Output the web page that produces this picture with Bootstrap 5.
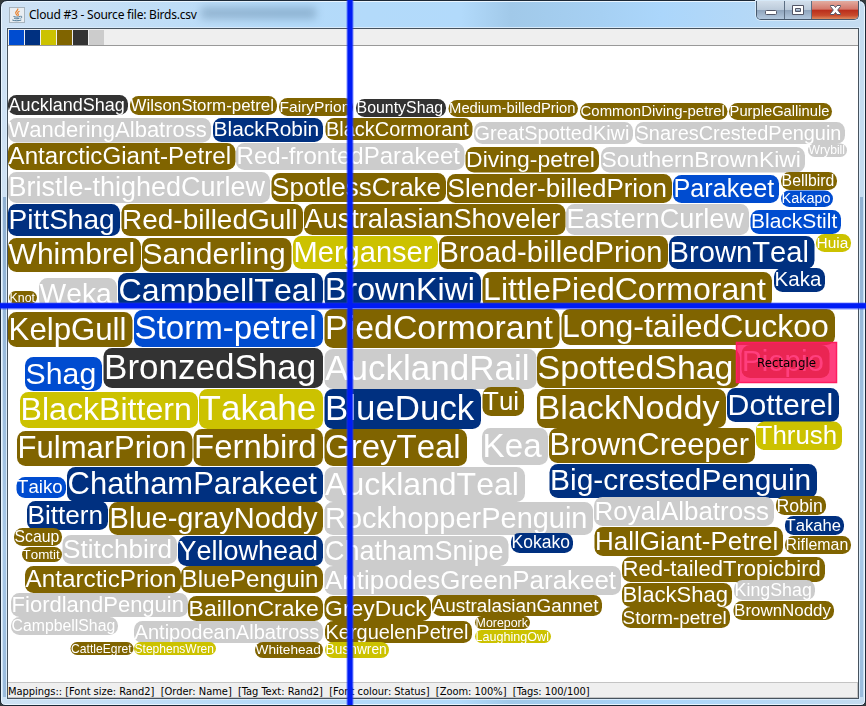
<!DOCTYPE html>
<html lang="en">
<head>
<meta charset="utf-8">
<title>Cloud #3 - Source file: Birds.csv</title>
<link href="https://cdn.jsdelivr.net/npm/bootstrap@5.3.0/dist/css/bootstrap.min.css" rel="stylesheet">
<style>
body{width:866px;height:706px;overflow:hidden;background:#333a3c;font-family:"DejaVu Sans Condensed","DejaVu Sans",sans-serif;color:#000}
.win{width:866px;height:706px;border:1px solid #1c2836;border-radius:7px 7px 5px 5px;padding:1px 6px 6px;
 background:linear-gradient(90deg,#cfe2f4 0,#b4daf9 280px,#b2dafb 460px,#a1c9e9 510px,#a6d0f3 600px,#abd6fb 660px,#b8d9f5 780px,#c5dcf0 100%);box-shadow:inset 0 0 0 1px #e9f5ff}
.win::before,.win::after{content:"";position:absolute;top:196px;bottom:8px;width:3px;left:2px;background:linear-gradient(#8fb0d1,#a9c9e8 70%,#9abbdc)}
.win::after{left:auto;right:2px}
.titlebar{height:26px}
.caption{font:12px/26px "Noto Sans","Open Sans",sans-serif;letter-spacing:-.23px;padding-left:4px;white-space:pre}
.ghost{left:200px;top:6px;width:115px;height:12px;background:#5c7f9d;opacity:.42;filter:blur(4px)}
.java{width:16px;height:16px;margin:5px 0 0 2px}
.ctl{height:19px;width:103px;margin-top:-1px;border:1px solid #46586c;border-top:0;border-radius:0 0 5px 5px;overflow:hidden;box-shadow:0 0 0 1px #d7e9f8}
.cbtn{width:28px;border-right:1px solid #5c6e83;background:linear-gradient(#d3dfeb 0,#bccbdb 48%,#8ea3bb 50%,#b2c7dd 100%)}
.cbtn.mid{width:27px}
.cbtn.xx{flex:1;border:0;background:linear-gradient(#e2aca0 0,#d4776a 46%,#b92d1b 50%,#c84a2c 80%,#dd8b60 100%)}
.client{background:#fff;border:1px solid #47535e;box-shadow:0 0 0 1px #d9ebfb;height:671px;width:852px}
.legend{height:17px;background:#efefef;border-bottom:1px solid #999;padding-left:1px;gap:1px}
.sw{width:15px;height:15px;margin-top:1px}
.c-b{background:#004cd0;fill:#004cd0}.c-n{background:#003080;fill:#003080}.c-y{background:#ccc200;fill:#ccc200}
.c-o{background:#806400;fill:#806400}.c-k{background:#333;fill:#333}.c-g{background:#ccc;fill:#ccc}
.status{height:16px;background:#efefef;border:1px solid #c4c4c4;border-left:0;font-size:11px;line-height:17px;white-space:pre;letter-spacing:-.02px}
.over{left:0;top:0;pointer-events:none}
.guides{z-index:2}
.tagtext{font-family:"Liberation Sans",Arial,sans-serif;fill:#fff;font-kerning:none}
</style>
<script src="https://cdn.jsdelivr.net/npm/bootstrap@5.3.0/dist/js/bootstrap.bundle.min.js"></script>
</head>
<body>
<div class="win position-relative d-flex flex-column">
  <div class="ghost position-absolute"></div>
  <header class="titlebar d-flex align-items-start">
    <svg class="java" viewBox="0 0 16 16"><rect x=".5" y=".5" width="15" height="15" fill="#e9eef2" stroke="#a7b4be"/><path d="M8.7 1.5c1.2 2-3.3 3.2-1.8 5.2.5.8 1.2 1.2 1 2M10.5 4.3c-1.700.7-2.500 1.700-1.300 2.900.5.7.2 1.200-.5 1.700" fill="none" stroke="#e8822e" stroke-width="1.2"/><path d="M4.500 9.500c2 .8 4.500.8 6.500 0M5.200 11.300c1.700.6 3.600.6 5.200 0M3.300 13c2.500 1 6.500 1 9 0M11.300 9.300c2-.5 2 1.500.2 2" fill="none" stroke="#4d7894"/></svg>
    <div class="caption">Cloud #3 - Source file: Birds.csv</div>
    <div class="ctl d-flex ms-auto">
      <div class="cbtn d-flex"><svg width="27" height="18"><rect x="8.500" y="9.500" width="11" height="4" rx="1" fill="#fff" stroke="#535666"/></svg></div>
      <div class="cbtn mid d-flex"><svg width="26" height="18"><path fill-rule="evenodd" d="M7.500 4.500h11v9h-11zM10.500 7.500v3h5v-3z" fill="#fff" stroke="#535666"/></svg></div>
      <div class="cbtn xx d-flex"><svg width="46" height="18"><path d="M18.500 4.500h3.500l1.500 2 1.500-2h3.500v1l-2.800 3.500 2.800 3.500v1h-3.500l-1.500-2-1.500 2h-3.500v-1l2.800-3.500-2.800-3.500z" fill="#fff" stroke="#535666"/></svg></div>
    </div>
  </header>
  <main class="client d-flex flex-column">
    <div class="legend d-flex"><div class="sw c-b"></div><div class="sw c-n"></div><div class="sw c-y"></div><div class="sw c-o"></div><div class="sw c-k"></div><div class="sw c-g"></div></div>
    <div class="flex-grow-1"></div>
    <footer class="status">Mappings:: [Font size: Rand2]  [Order: Name]  [Tag Text: Rand2]  [Font colour: Status]  [Zoom: 100%]  [Tags: 100/100]</footer>
  </main>
  <svg id="cloud" class="over position-fixed" width="866" height="706" viewBox="0 0 866 706"></svg>
  <svg class="over guides position-fixed" width="866" height="706" viewBox="0 0 866 706">
    <rect x="736.500" y="342.500" width="100" height="40" fill="#ff1864" fill-opacity=".83" stroke="#ff1c60" stroke-width="1.500"/>
    <text x="757" y="367" font-size="12" textLength="59" lengthAdjust="spacingAndGlyphs">Rectangle</text>
    <path d="M350 0V705M0 306H866" stroke="#2440ff" stroke-opacity=".55" stroke-width="7"/>
    <path d="M350 0V705M0 305.800H866" stroke="#001cf5" stroke-width="5"/>
  </svg>
</div>
<script>
// colour, left, top, right, bottom, label
const tags = `k 8 95 128 115 AucklandShag
o 130 96 277 115 WilsonStorm-petrel
o 279 98 353 116 FairyPrion
k 356 99 446 117 BountyShag
o 448.5 100 578 117 Medium-billedPrion
o 580 103 727.5 120 CommonDiving-petrel
o 729 103 832 120 PurpleGallinule
g 8 118 211 142.5 WanderingAlbatross
n 213 118 323 142 BlackRobin
o 325.5 118 472.5 140 BlackCormorant
g 474 122 633 144 GreatSpottedKiwi
g 635 122 845 144 SnaresCrestedPenguin
g 808 143.5 847 157 Wrybill
o 8 143 235.5 170 AntarcticGiant-Petrel
g 236 143 464.5 170 Red-frontedParakeet
o 465.5 147 599 172.5 Diving-petrel
g 601 147 805 172.5 SouthernBrownKiwi
g 8 172 270 203 Bristle-thighedCurlew
o 271.5 173 446 202 SpotlessCrake
o 447 174 672 203 Slender-billedPrion
b 673 175 779 203 Parakeet
o 781 172 837 190 Bellbird
b 781 190.5 833 207 Kakapo
n 8 204 120 236 PittShag
o 121.5 204 303 236 Red-billedGull
o 304 204 565.5 235 AustralasianShoveler
g 566 204 749 235 EasternCurlew
b 750.5 210 841 234 BlackStilt
y 816 234 851 252 Huia
o 8 238 141 272 Whimbrel
o 142 238 291.5 272 Sanderling
y 293 236 438 269 Merganser
o 439 236 668 269 Broad-billedPrion
n 669 236 814.5 269 BrownTeal
n 774 268 825 292 Kaka
o 482.5 272 772 308 LittlePiedCormorant
n 324.5 272 481 308 BrownKiwi
n 118 273 323 308 CampbellTeal
g 39 278 117 308 Weka
o 9 291 37 304 Knot
o 8 312 132.5 347 KelpGull
b 134 310 323 347 Storm-petrel
o 324.5 309 559.5 348 PiedCormorant
o 561.5 309 835 345 Long-tailedCuckoo
b 25 357 102 391 Shag
k 103.5 348 323 388 BronzedShag
g 324.5 349 536.5 389 AucklandRail
o 537 349 740 388 SpottedShag
o 741.5 345 829.5 378 Piopio
y 20 392 198 428 BlackBittern
y 199 389 323 429 Takahe
n 324.5 389 481 429 BlueDuck
o 482.5 387 524 416 Tui
o 537 389 726 428 BlackNoddy
n 727 388 839 422 Dotterel
y 756 421.5 842 450 Thrush
o 17 431 192.5 466 FulmarPrion
o 193.5 429 323 466 Fernbird
o 324.5 429 467 466 GreyTeal
g 482 428 548 465 Kea
o 549 428 755 463 BrownCreeper
n 549.5 464 817 498 Big-crestedPenguin
b 16.5 477 66 498 Taiko
n 67 467 323 502 ChathamParakeet
g 324.5 467 525 502 AucklandTeal
n 27 501 108 530 Bittern
o 109 502 323 535 Blue-grayNoddy
g 324.5 502 593 535 RockhopperPenguin
g 594 497 774 526 RoyalAlbatross
o 776 496 826 515 Robin
n 785 516 844 535 Takahe
o 785 536 851 554 Rifleman
o 594.5 527 783 556 HallGiant-Petrel
o 14 528 62 546 Scaup
o 22 547 62 562 Tomtit
g 62.5 535 177 564 Stitchbird
n 178 536 323 566 Yellowhead
g 324.5 536 508.5 566 ChathamSnipe
n 511 533 573 553 Kokako
o 25 566 181 593 AntarcticPrion
o 181 566 323 593 BluePenguin
g 324.5 566 621 595 AntipodesGreenParakeet
o 622 557 825 582 Red-tailedTropicbird
o 622 583 732 607 BlackShag
g 734 580 815 600 KingShag
o 622 607 730 628 Storm-petrel
o 733.5 601 834 620 BrownNoddy
g 11 593 188 617 FiordlandPenguin
o 188 596 323 621 BaillonCrake
o 324.5 596 431 621 GreyDuck
o 432 595 602 616 AustralasianGannet
g 11 617 118 635 CampbellShag
g 134 621 323 643 AntipodeanAlbatross
o 325 621 472 643 KerguelenPetrel
o 475 616 530 629 Morepork
y 475 630 551 643 LaughingOwl
o 70.5 642 133.5 655 CattleEgret
y 134 642 216 655 StephensWren
o 255 642 323 658 Whitehead
y 325 642 389 658 Bushwren`.split('\n').map(l => l.trim().split(' '));
const svg = document.getElementById('cloud'), NS = svg.namespaceURI;
function add(name, attrs, text) {
  const e = document.createElementNS(NS, name);
  for (const k in attrs) e.setAttribute(k, attrs[k]);
  if (text) e.textContent = text;
  svg.appendChild(e);
  return e;
}
for (const [c, l, t, r, b, label] of tags) {
  const x = +l, y = +t, w = r - l, h = b - t;
  add('rect', {class: 'c-' + c, x, y, width: w, height: h, rx: Math.min(8.5, h / 2)});
  // font size follows from the box width: label width plus a fifth of an em of padding
  const e = add('text', {class: 'tagtext', x: x + .6, y, 'font-size': 100}, label);
  const size = w / (e.getComputedTextLength() / 100 + .21);
  e.setAttribute('font-size', size.toFixed(2));
  e.setAttribute('y', (y + size * .88).toFixed(1));
}
</script>
</body>
</html>
